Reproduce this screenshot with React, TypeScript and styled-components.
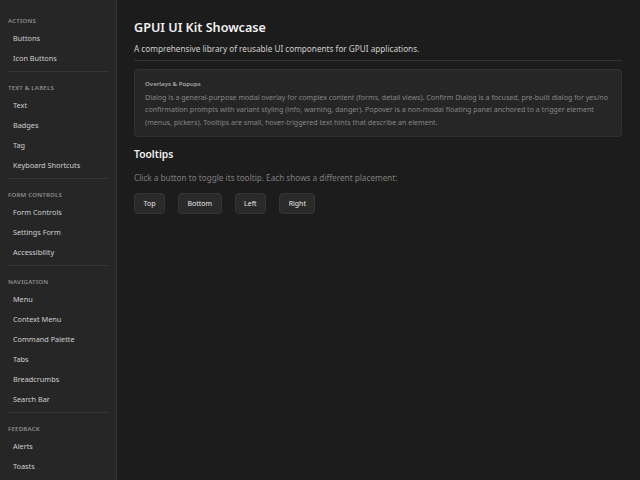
import { createGlobalStyle } from "styled-components";
import styled from "styled-components";

const GlobalStyle = createGlobalStyle`
  html, body {
    margin: 0;
    padding: 0;
    background: #1c1c1c;
    height: 100%;
  }
  body {
    font-family: "Noto Sans", "Liberation Sans", sans-serif;
    -webkit-font-smoothing: antialiased;
  }
  #root {
    height: 100%;
  }
`;

const sections = [
  { title: "Actions", items: ["Buttons", "Icon Buttons"] },
  { title: "Text & Labels", items: ["Text", "Badges", "Tag", "Keyboard Shortcuts"] },
  { title: "Form Controls", items: ["Form Controls", "Settings Form", "Accessibility"] },
  {
    title: "Navigation",
    items: ["Menu", "Context Menu", "Command Palette", "Tabs", "Breadcrumbs", "Search Bar"],
  },
  { title: "Feedback", items: ["Alerts", "Toasts"] },
];

const placements = ["Top", "Bottom", "Left", "Right"];

export default function App() {
  return (
    <>
      <GlobalStyle />
      <Layout>
        <Sidebar>
          {sections.map((section, i) => (
            <Group key={section.title} $first={i === 0}>
              <GroupTitle>{section.title}</GroupTitle>
              {section.items.map((item) => (
                <NavItem key={item}>{item}</NavItem>
              ))}
            </Group>
          ))}
        </Sidebar>

        <Main>
          <Title>GPUI UI Kit Showcase</Title>
          <Subtitle>A comprehensive library of reusable UI components for GPUI applications.</Subtitle>
          <Rule />

          <InfoCard>
            <CardTitle>Overlays &amp; Popups</CardTitle>
            <CardBody>
              Dialog is a general-purpose modal overlay for complex content (forms, detail views).
              Confirm Dialog is a focused, pre-built dialog for yes/no confirmation prompts with
              variant styling (info, warning, danger). Popover is a non-modal floating panel anchored
              to a trigger element (menus, pickers). Tooltips are small, hover-triggered text hints
              that describe an element.
            </CardBody>
          </InfoCard>

          <SectionTitle>Tooltips</SectionTitle>
          <Hint>Click a button to toggle its tooltip. Each shows a different placement:</Hint>
          <ButtonRow>
            {placements.map((p) => (
              <Button key={p}>{p}</Button>
            ))}
          </ButtonRow>
        </Main>
      </Layout>
    </>
  );
}

const Layout = styled.div`
  display: flex;
  height: 480px;
  overflow: hidden;
`;

const Sidebar = styled.nav`
  width: 117px;
  flex-shrink: 0;
  background: #262626;
  border-right: 1px solid #333;
  padding: 15px 8px 0;
  box-sizing: border-box;
  overflow: hidden;
`;

const Group = styled.div<{ $first?: boolean }>`
  display: flex;
  flex-direction: column;
  border-top: ${(p) => (p.$first ? "none" : "1px solid #353535")};
  padding-top: ${(p) => (p.$first ? "0" : "10px")};
  padding-bottom: 3px;
`;

const GroupTitle = styled.div`
  font-size: 6.1px;
  font-weight: 600;
  letter-spacing: 0.2px;
  text-transform: uppercase;
  color: #8c8c8c;
  height: 12px;
  line-height: 12px;
  margin-bottom: 1px;
`;

const NavItem = styled.div`
  font-size: 7.3px;
  color: #cfcfcf;
  height: 20px;
  line-height: 20px;
  padding-left: 5px;
  white-space: nowrap;
`;

const Main = styled.main`
  flex: 1;
  padding: 17px 18px 0 17px;
  display: flex;
  flex-direction: column;
  min-width: 0;
`;

const Title = styled.h1`
  margin: 0;
  font-size: 12.6px;
  font-weight: 600;
  color: #f2f2f2;
  line-height: 22px;
`;

const Subtitle = styled.p`
  margin: 3px 0 0;
  font-size: 8.2px;
  color: #cfcfcf;
  line-height: 14px;
`;

const Rule = styled.div`
  height: 1px;
  background: #333;
  margin-top: 4px;
`;

const InfoCard = styled.section`
  margin-top: 8px;
  background: #262626;
  border: 1px solid #313131;
  border-radius: 4px;
  padding: 8px 10px 8px;
`;

const CardTitle = styled.div`
  font-size: 6.1px;
  font-weight: 600;
  color: #a8a8a8;
  line-height: 12px;
`;

const CardBody = styled.p`
  margin: 1px 0 0;
  font-size: 7.1px;
  color: #858585;
  line-height: 12.3px;
`;

const SectionTitle = styled.h2`
  margin: 9px 0 0;
  font-size: 10.3px;
  font-weight: 600;
  color: #f0f0f0;
  line-height: 16px;
`;

const Hint = styled.p`
  margin: 9px 0 0;
  font-size: 8.2px;
  color: #7e7e7e;
  line-height: 14px;
`;

const ButtonRow = styled.div`
  display: flex;
  gap: 13px;
  margin-top: 8px;
`;

const Button = styled.button`
  font-family: inherit;
  font-size: 7px;
  font-weight: 400;
  color: #e6e6e6;
  background: #2a2a2a;
  border: 1px solid #343434;
  border-radius: 4px;
  height: 21px;
  padding: 0 8.5px;
  cursor: pointer;
`;
